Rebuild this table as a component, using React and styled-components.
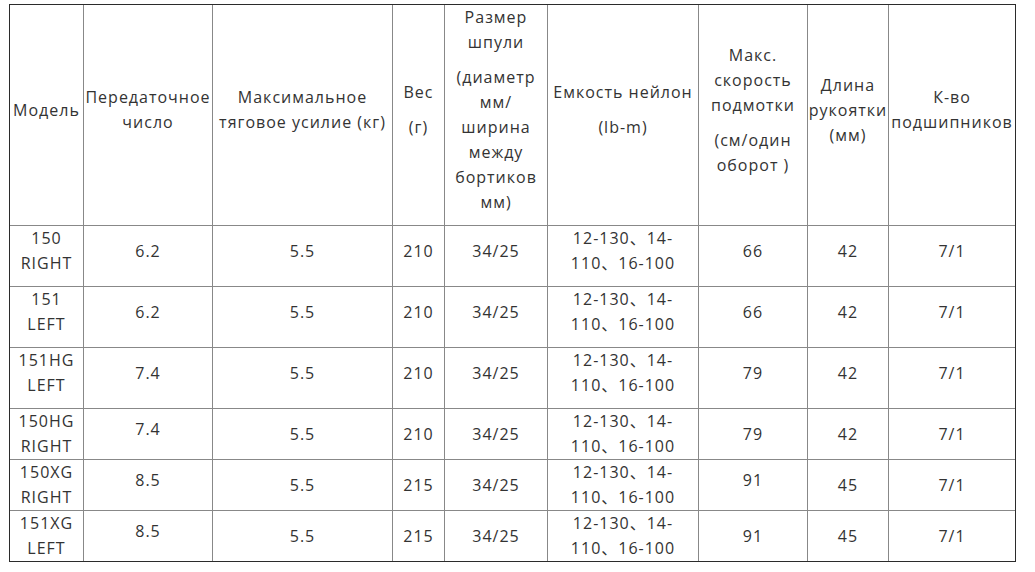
import React from "react";
import styled, { createGlobalStyle } from "styled-components";

const Global = createGlobalStyle`
  *, *::before, *::after { box-sizing: border-box; }
  html, body { margin: 0; padding: 0; background: #fff; }
  body {
    font-family: "Open Sans", "Noto Sans CJK SC", sans-serif;
    font-size: 16px;
    line-height: 25px;
    letter-spacing: 1px;
    color: #333;
  }
`;

const Page = styled.div`
  padding: 4px 0 0 9px;
`;

const Table = styled.table`
  width: 1007px;
  table-layout: fixed;
  border-collapse: separate;
  border-spacing: 0;
  border: 1px solid #2b2b2b;
`;

const Cell = styled.td`
  padding: 0;
  text-align: center;
  vertical-align: middle;
  border-right: 1px solid #888;
  border-bottom: 1px solid #888;
  font-weight: 400;
  color: #333;
  &:last-child { border-right: none; }
  tr:last-child > & { border-bottom: none; }
`;

const Para = styled.p`
  margin: 0 0 10px;
`;

const widths = [74, 129, 180, 52, 103, 151, 109, 81, 126];

const header = [
  [["Модель"]],
  [["Передаточное", "число"]],
  [["Максимальное", "тяговое усилие (кг)"]],
  [["Вес"], ["(г)"]],
  [["Размер", "шпули"], ["(диаметр", "мм/", "ширина", "между", "бортиков", "мм)"]],
  [["Емкость нейлон"], ["(lb-m)"]],
  [["Макс.", "скорость", "подмотки"], ["(см/один", "оборот )"]],
  [["Длина", "рукоятки", "(мм)"]],
  [["К-во", "подшипников"]],
];

const cap = ["12-130、14-", "110、16-100"];

const rows = [
  { cells: [["150", "RIGHT"], ["6.2"], ["5.5"], ["210"], ["34/25"], cap, ["66"], ["42"], ["7/1"]], wrap: "all" },
  { cells: [["151", "LEFT"], ["6.2"], ["5.5"], ["210"], ["34/25"], cap, ["66"], ["42"], ["7/1"]], wrap: "all" },
  { cells: [["151HG", "LEFT"], ["7.4"], ["5.5"], ["210"], ["34/25"], cap, ["79"], ["42"], ["7/1"]], wrap: "all" },
  { cells: [["150HG", "RIGHT"], ["7.4"], ["5.5"], ["210"], ["34/25"], cap, ["79"], ["42"], ["7/1"]], wrap: [1] },
  { cells: [["150XG", "RIGHT"], ["8.5"], ["5.5"], ["215"], ["34/25"], cap, ["91"], ["45"], ["7/1"]], wrap: [1, 6] },
  { cells: [["151XG", "LEFT"], ["8.5"], ["5.5"], ["215"], ["34/25"], cap, ["91"], ["45"], ["7/1"]], wrap: [1] },
];

const Lines = ({ lines }) =>
  lines.map((l, i) => (
    <React.Fragment key={i}>
      {i > 0 && <br />}
      {l}
    </React.Fragment>
  ));

export default function App() {
  return (
    <>
      <Global />
      <Page>
        <Table>
          <colgroup>
            {widths.map((w, i) => (
              <col key={i} style={{ width: w }} />
            ))}
          </colgroup>
          <tbody>
            <tr>
              {header.map((paras, i) => (
                <Cell key={i}>
                  {paras.map((p, j) => (
                    <Para key={j}>
                      <Lines lines={p} />
                    </Para>
                  ))}
                </Cell>
              ))}
            </tr>
            {rows.map((r, ri) => (
              <tr key={ri}>
                {r.cells.map((c, ci) => {
                  const wrapped = r.wrap === "all" || r.wrap.includes(ci);
                  return (
                    <Cell key={ci}>
                      {wrapped ? (
                        <Para>
                          <Lines lines={c} />
                        </Para>
                      ) : (
                        <Lines lines={c} />
                      )}
                    </Cell>
                  );
                })}
              </tr>
            ))}
          </tbody>
        </Table>
      </Page>
    </>
  );
}
